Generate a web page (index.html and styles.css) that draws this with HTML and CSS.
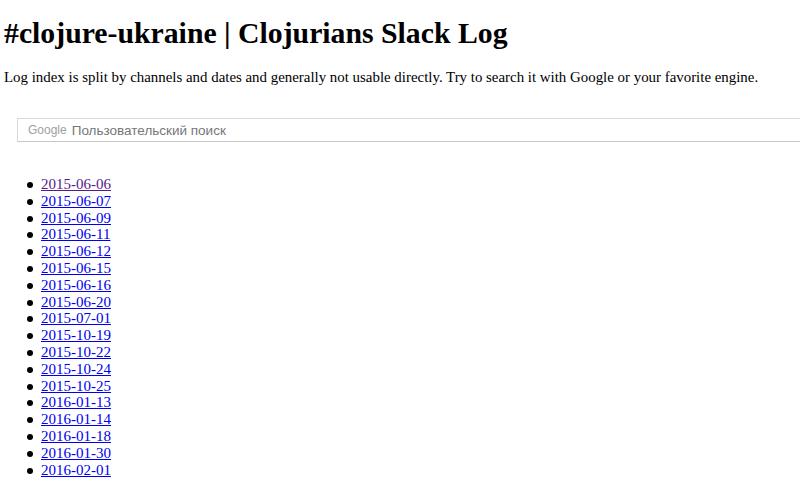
FILE: index.html
```html
<!DOCTYPE html>
<html>
<head>
<meta charset="utf-8">
<title>#clojure-ukraine | Clojurians Slack Log</title>
<link rel="stylesheet" href="styles.css">
</head>
<body>
<h1 class="title">#clojure-ukraine | Clojurians Slack Log</h1>
<p class="intro">Log index is split by channels and dates and generally not usable directly. Try to search it with Google or your favorite engine.</p>
<div class="search">
  <span class="search-brand">Google</span>
  <span class="search-placeholder">Пользовательский поиск</span>
</div>
<ul class="dates">
  <li><a class="visited" href="#">2015-06-06</a></li>
  <li><a href="#">2015-06-07</a></li>
  <li><a href="#">2015-06-09</a></li>
  <li><a href="#">2015-06-11</a></li>
  <li><a href="#">2015-06-12</a></li>
  <li><a href="#">2015-06-15</a></li>
  <li><a href="#">2015-06-16</a></li>
  <li><a href="#">2015-06-20</a></li>
  <li><a href="#">2015-07-01</a></li>
  <li><a href="#">2015-10-19</a></li>
  <li><a href="#">2015-10-22</a></li>
  <li><a href="#">2015-10-24</a></li>
  <li><a href="#">2015-10-25</a></li>
  <li><a href="#">2016-01-13</a></li>
  <li><a href="#">2016-01-14</a></li>
  <li><a href="#">2016-01-18</a></li>
  <li><a href="#">2016-01-30</a></li>
  <li><a href="#">2016-02-01</a></li>
</ul>
</body>
</html>
```
FILE: styles.css
```css
html { overflow: hidden; }
body {
  margin: 0;
  padding: 16px 0 0 4px;
  font-family: "Liberation Serif", "Times New Roman", serif;
  font-size: 15px;
  color: #000;
  background: #fff;
}
.title {
  margin: 0;
  font-size: 29.75px;
  line-height: 34px;
  font-weight: bold;
}
.intro {
  margin: 19px 0 0;
  line-height: 17px;
  font-size: 14.9px;
}
.search {
  margin: 32px 0 0 13px;
  height: 22px;
  border: 1px solid #d9d9d9;
  border-bottom-color: #c8c8c8;
  border-right: none;
  display: flex;
  align-items: center;
  gap: 5px;
  padding-left: 10px;
  font-family: "Liberation Sans", Arial, sans-serif;
}
.search-brand {
  font-size: 12px;
  color: #a0a0a0;
}
.search-placeholder {
  font-size: 13.5px;
  color: #777;
}
.dates {
  margin: 34px 0 0;
  padding-left: 37px;
  line-height: 16.8px;
  list-style: none;
}
.dates li { position: relative; }
.dates li::before {
  content: "";
  position: absolute;
  left: -14px;
  top: 6px;
  width: 6px;
  height: 6px;
  border-radius: 50%;
  background: #000;
}
.dates a { color: #0000ee; }
.dates a.visited { color: #551a8b; }
```
